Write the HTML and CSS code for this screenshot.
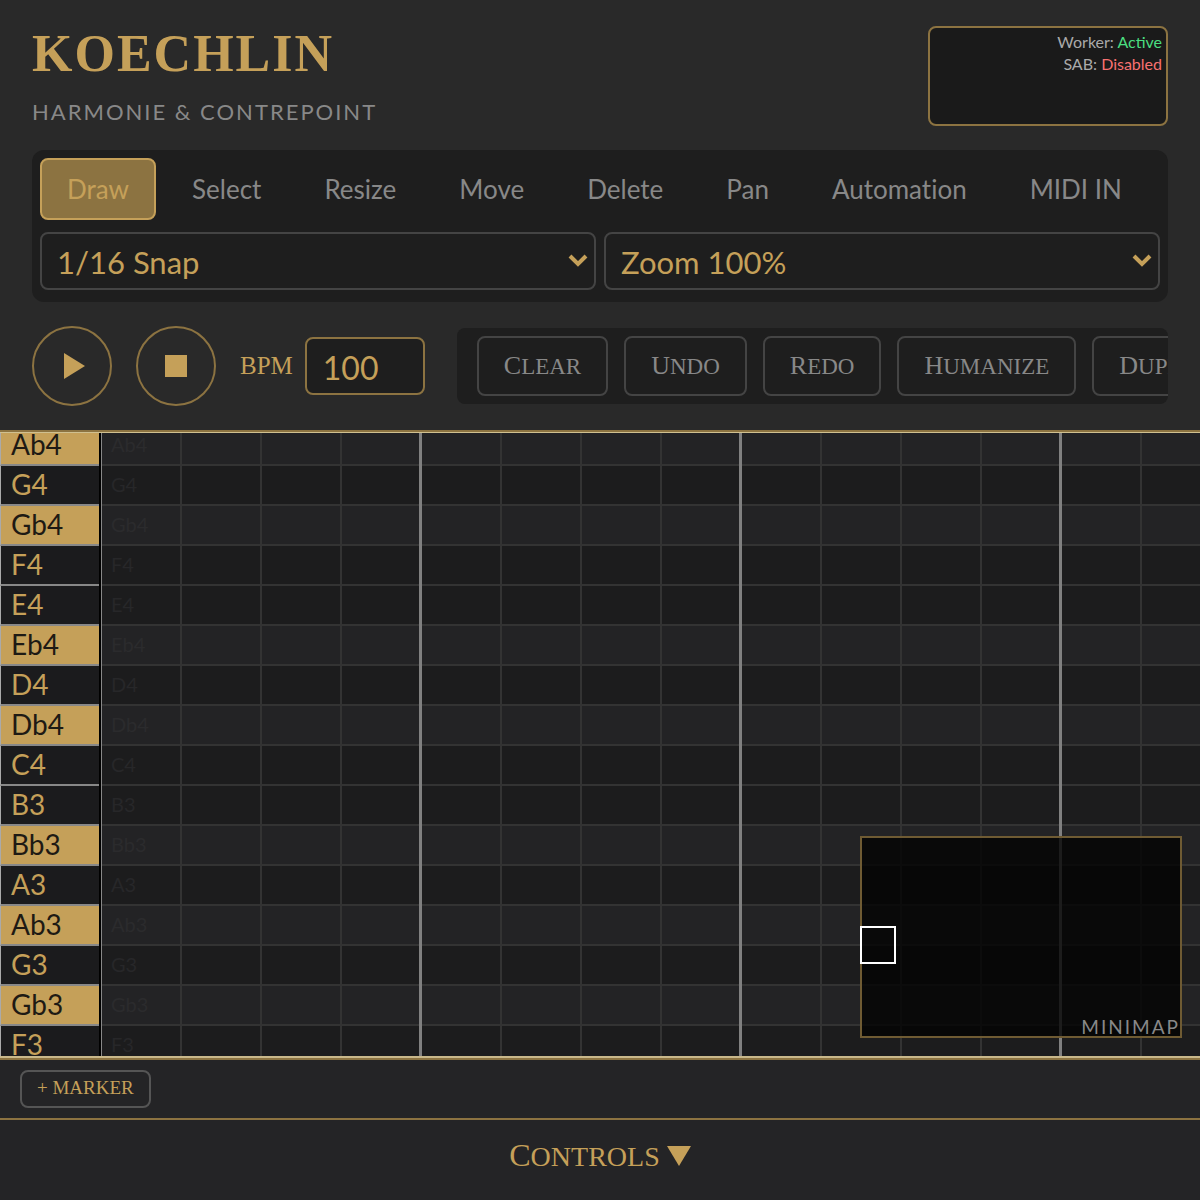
FILE: index.html
```
<!DOCTYPE html>
<html lang="fr">
<head>
    <meta charset="utf-8" />
    <meta name="viewport" content="width=device-width,initial-scale=1" />
    <title>Koechlin</title>
    <link rel="stylesheet" href="styles.css">
</head>
<body>
    <header>
        <div class="brand">
            <div>
                <h1>KOECHLIN</h1>
                <p class="subtitle">HARMONIE &amp; CONTREPOINT</p>
            </div>
            <div class="status">
                <p>Worker: <span class="ok">Active</span></p>
                <p>SAB: <span class="error">Disabled</span></p>
            </div>
        </div>

        <div class="toolbar">
            <div class="tools">
                <button class="tool active">Draw</button>
                <button class="tool">Select</button>
                <button class="tool">Resize</button>
                <button class="tool">Move</button>
                <button class="tool">Delete</button>
                <button class="tool">Pan</button>
                <button class="tool">Automation</button>
                <button class="tool">MIDI IN</button>
            </div>
            <div class="selects">
                <select aria-label="Snap">
                    <option>1/16 Snap</option>
                </select>
                <select aria-label="Zoom">
                    <option>Zoom 100%</option>
                </select>
            </div>
        </div>

        <div class="transport">
            <button class="round" aria-label="Play">
                <svg width="26" height="26" viewBox="0 0 26 26"><path d="M5 0L26 13L5 26Z"/></svg>
            </button>
            <button class="round" aria-label="Stop">
                <svg width="22" height="22" viewBox="0 0 22 22"><rect width="22" height="22"/></svg>
            </button>
            <div class="bpm">
                <label for="bpm">BPM</label>
                <input type="text" inputmode="numeric" id="bpm" value="100">
            </div>
            <div class="actions">
                <button>Clear</button>
                <button>Undo</button>
                <button>Redo</button>
                <button>Humanize</button>
                <button>Duplicate</button>
            </div>
        </div>
    </header>

    <main>
        <div id="roll"></div>
        <div class="minimap">
            <div class="view"></div>
            <span>MINIMAP</span>
        </div>
    </main>

    <div class="markers">
        <button>+ MARKER</button>
    </div>

    <footer>
        <button>Controls <svg width="24" height="20" viewBox="0 0 24 20"><path d="M0 0H24L12 20Z"/></svg></button>
    </footer>

    <script>
        const ROLL = document.querySelector('#roll');
        const NOTES = ['Ab4', 'G4', 'Gb4', 'F4', 'E4', 'Eb4', 'D4', 'Db4', 'C4',
                       'B3', 'Bb3', 'A3', 'Ab3', 'G3', 'Gb3', 'F3'];

        // One row per note: the key, then its lane
        for (let i = 0; i < NOTES.length; i++){
            let row = document.createElement('div');
            row.className = NOTES[i].includes('b') ? 'row flat' : 'row';
            row.innerHTML = '<div class="key">' + NOTES[i] + '</div><div class="lane">' + NOTES[i] + '</div>';
            ROLL.appendChild(row);
        }
    </script>
</body>
</html>
```
FILE: styles.css
```
* {margin: 0; padding: 0; box-sizing: border-box;}

:root {
    --gold: #c5a059;
    --gold-dark: #8c7341;
    --gray: #888;
    --line: #444;
    --panel: #1e1e1e;
    --serif: "Liberation Serif", serif;
}

body {
    display: flex;
    flex-direction: column;
    height: 100vh;
    background: #242426;
    color: var(--gray);
    font-family: Lato, sans-serif;
}

button, input, select {
    font-family: inherit;
    color: inherit;
    background: none;
    border: 2px solid var(--line);
    border-radius: 8px;
}
button {cursor: pointer;}
svg {fill: var(--gold);}

header {
    display: flex;
    flex-direction: column;
    gap: 24px;
    padding: 26px 32px 24px;
    background: #292929;
    border-bottom: 2px solid var(--gold-dark);
}

.brand {
    display: flex;
    justify-content: space-between;
}

h1 {
    color: var(--gold);
    font-family: var(--serif);
    font-size: 52px;
    line-height: 56px;
    letter-spacing: 2px;
}

.subtitle {
    margin-top: 16px;
    font-size: 22px;
    line-height: 28px;
    letter-spacing: 2px;
}

.status {
    width: 240px;
    height: 100px;
    padding: 3px 4px;
    background: #1a1a1a;
    border: 2px solid var(--gold-dark);
    border-radius: 8px;
    color: #aaa;
    font-size: 16px;
    line-height: 22px;
    text-align: right;
}
.ok {color: #4ade80;}
.error {color: #f87171;}

.toolbar {
    display: flex;
    flex-direction: column;
    gap: 12px;
    padding: 8px 8px 12px;
    background: var(--panel);
    border-radius: 12px;
}

.tools {
    display: flex;
    gap: 9px;
}

.selects {
    display: flex;
    gap: 8px;
}

.tool {
    padding: 0 25px;
    border-color: transparent;
    font-size: 26px;
    line-height: 58px;
    font-variant-ligatures: none;
}
.tool.active {
    color: var(--gold);
    background: var(--gold-dark);
    border-color: var(--gold);
}

select {
    flex: 1;
    height: 58px;
    padding: 2px 15px 0;
    appearance: none;
    color: var(--gold);
    font-size: 31px;
    background: url("data:image/svg+xml,%3Csvg xmlns='http://www.w3.org/2000/svg' width='20' height='14'%3E%3Cpath d='M2 2L10 10L18 2' fill='none' stroke='%23c5a059' stroke-width='4'/%3E%3C/svg%3E") no-repeat right 6px center;
}

.transport {
    display: flex;
    align-items: center;
    gap: 24px;
}

.round {
    display: flex;
    flex: none;
    align-items: center;
    justify-content: center;
    width: 80px;
    height: 80px;
    border-color: var(--gold-dark);
    border-radius: 50%;
}

.bpm {
    display: flex;
    align-items: center;
    gap: 12px;
    margin-right: 8px;
    color: var(--gold);
    font-family: var(--serif);
    font-size: 25px;
}
.bpm input {
    width: 120px;
    height: 58px;
    padding: 2px 16px 0;
    border-color: var(--gold-dark);
    background: var(--panel);
    font-family: Lato, sans-serif;
    font-size: 32px;
}

.actions {
    display: flex;
    flex: 1;
    gap: 16px;
    min-width: 0;
    overflow: hidden;
    padding: 8px 20px;
    background: var(--panel);
    border-radius: 8px;
}
.actions button {
    flex: none;
    height: 60px;
    padding: 0 25px;
    font-family: var(--serif);
    font-size: 23px;
    text-transform: uppercase;
}
.actions button::first-letter {font-size: 26px;}

main {
    position: relative;
    flex: 1;
    min-height: 0;
    overflow: hidden;
    border-top: 1px solid #d0c090;
    border-bottom: 2px solid #c9b88a;
}

/* the roll is scrolled a little past the top of its first row */
#roll {margin-top: -7px;}

.row {
    display: flex;
    height: 40px;
    line-height: 36px;
    background: #000;
}

.key {
    width: 99px;
    padding-left: 10px;
    color: var(--gold);
    background: #1b1b1d;
    border-left: 1px solid #aaa;
    border-bottom: 2px solid var(--gray);
    font-size: 28px;
}
.flat .key {
    color: #1e1a14;
    background: var(--gold);
}

.lane {
    flex: 1;
    margin-left: 2px;
    padding-left: 9px;
    color: #272729;
    border-left: 1px solid var(--gray);
    font-size: 20px;
    background:
        repeating-linear-gradient(to right, transparent 0 317px, #808080 317px 320px),
        repeating-linear-gradient(to right, transparent 0 78px, #333 78px 80px),
        linear-gradient(to top, #333 0 2px, #1c1c1d 2px);
}
.flat .lane {
    color: #2b2b2d;
    background:
        repeating-linear-gradient(to right, transparent 0 317px, #808080 317px 320px),
        repeating-linear-gradient(to right, transparent 0 78px, #333 78px 80px),
        linear-gradient(to top, #333 0 2px, #232325 2px);
}

.minimap {
    position: absolute;
    right: 18px;
    bottom: 18px;
    width: 322px;
    height: 202px;
    background: rgba(3, 3, 3, 0.8);
    border: 2px solid #6f5b33;
}
.minimap .view {
    position: absolute;
    left: -2px;
    top: 88px;
    width: 36px;
    height: 38px;
    border: 2px solid #fff;
}
.minimap span {
    position: absolute;
    right: 0;
    bottom: 0;
    font-size: 19px;
    line-height: 18px;
    letter-spacing: 2px;
}

.markers {
    padding: 10px 20px;
    border-top: 2px solid var(--gold-dark);
    border-bottom: 2px solid var(--gold-dark);
}
.markers button {
    display: block;
    height: 38px;
    padding: 0 15px 2px;
    border-color: #555;
    color: var(--gold);
    font-family: var(--serif);
    font-size: 19px;
}

footer {
    padding: 11px 16px 21px;
    text-align: center;
}
footer button {
    height: 48px;
    border: 0;
    color: var(--gold);
    font-family: var(--serif);
    font-size: 28px;
    text-transform: uppercase;
}
footer button::first-letter {font-size: 32px;}
```
